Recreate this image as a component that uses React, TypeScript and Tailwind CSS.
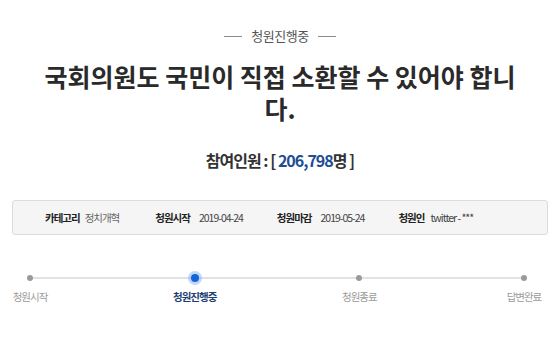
import React from "react";

const font = { fontFamily: '"Noto Sans CJK KR", "Noto Sans", sans-serif' };

function Step({ label, active }: { label: string; active?: boolean }) {
  return (
    <div className="flex w-[60px] flex-col items-center">
      <div className="flex h-[14px] items-center justify-center">
        {active ? (
          <div className="h-[8px] w-[8px] rounded-full bg-[#1565d8] shadow-[0_0_0_3px_rgba(80,150,240,0.35)]" />
        ) : (
          <div className="h-[6px] w-[6px] rounded-full bg-[#9a9a9a]" />
        )}
      </div>
      <div
        className={
          "mt-[5px] whitespace-nowrap text-[10.5px] leading-[14px] tracking-[-1px] " +
          (active ? "font-bold text-[#1d3e72]" : "text-[#9a9a9a]")
        }
      >
        {label}
      </div>
    </div>
  );
}

export default function App() {
  return (
    <div className="h-[350px] w-[560px] overflow-hidden bg-white" style={font}>
      <div className="flex flex-col items-center">
        <div className="mt-[28px] flex items-center gap-[9px]">
          <div className="h-px w-[18px] bg-[#8a8a8a]" />
          <div className="text-[13px] leading-[16px] tracking-[-0.5px] text-[#555]">청원진행중</div>
          <div className="h-px w-[18px] bg-[#8a8a8a]" />
        </div>
        <h1 className="mt-[16px] w-[496px] text-center text-[25px] font-bold leading-[32px] tracking-[0px] text-[#2a2a2a]">
          국회의원도 국민이 직접 소환할 수 있어야 합니다.
        </h1>
        <div className="mt-[26px] text-[16px] font-bold leading-[20px] tracking-[-1px] text-[#333]">
          참여인원 : [ <span className="text-[#1c4e94]">206,798</span>명 ]
        </div>
      </div>
      <div className="mx-[12px] mt-[30px] flex h-[35px] items-center rounded-[3px] border border-[#dcdcdc] bg-[#f5f5f5] pl-[32px] text-[10.5px] leading-[14px] tracking-[-1px] text-[#444]">
        <span className="font-bold text-[#222]">카테고리</span>
        <span className="ml-[5px] text-[#666]">정치개혁</span>
        <span className="ml-[36px] font-bold text-[#222]">청원시작</span>
        <span className="ml-[9px]">2019-04-24</span>
        <span className="ml-[34px] font-bold text-[#222]">청원마감</span>
        <span className="ml-[9px]">2019-05-24</span>
        <span className="ml-[34px] font-bold text-[#222]">청원인</span>
        <span className="ml-[6px]">twitter - ***</span>
      </div>
      <div className="relative mt-[36px] flex w-[554px] justify-between">
        <div className="absolute left-[30px] right-[30px] top-[6px] h-[2px] bg-[#e2e2e2]" />
        <div className="relative flex w-full justify-between">
          <Step label="청원시작" />
          <Step label="청원진행중" active />
          <Step label="청원종료" />
          <Step label="답변완료" />
        </div>
      </div>
    </div>
  );
}
